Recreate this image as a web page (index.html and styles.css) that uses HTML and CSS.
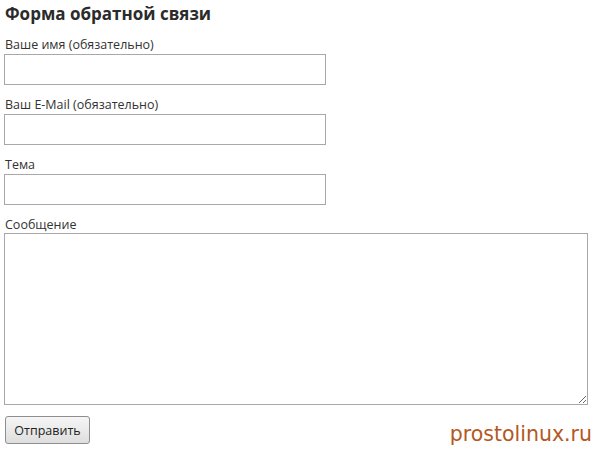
FILE: index.html
```html
<!DOCTYPE html>
<html lang="ru">
<head>
<meta charset="utf-8">
<title>Форма обратной связи</title>
<link rel="stylesheet" href="styles.css">
</head>
<body>
<form class="form">
  <h2 class="title">Форма обратной связи</h2>
  <div class="field">
    <label class="label">Ваше имя (обязательно)</label>
    <input class="input" type="text">
  </div>
  <div class="field">
    <label class="label">Ваш E-Mail (обязательно)</label>
    <input class="input" type="text">
  </div>
  <div class="field">
    <label class="label">Тема</label>
    <input class="input" type="text">
  </div>
  <div class="field field-last">
    <label class="label label-last">Сообщение</label>
    <textarea class="textarea"></textarea>
  </div>
  <div class="actions">
    <button class="button" type="button">Отправить</button>
  </div>
</form>
<div class="watermark">prostolinux.ru</div>
</body>
</html>
```
FILE: styles.css
```css
html, body {
  margin: 0;
  padding: 0;
  background: #ffffff;
}
body {
  width: 594px;
  height: 451px;
  position: relative;
  overflow: hidden;
  font-family: "Open Sans", "Noto Sans", sans-serif;
  color: #333333;
}
.form {
  display: flex;
  flex-direction: column;
  padding: 2px 0 0 4px;
}
.title {
  margin: 0 0 11px 1px;
  font-size: 17px;
  line-height: 24px;
  font-weight: 700;
  color: #2b2b2b;
}
.field {
  display: flex;
  flex-direction: column;
  align-items: flex-start;
  margin-bottom: 12px;
}
.label {
  font-size: 12.5px;
  line-height: 16px;
  margin: 0 0 1px 1px;
  color: #333333;
}
.label-last {
  margin-bottom: 0;
}
.input {
  box-sizing: border-box;
  width: 322px;
  height: 31px;
  margin: 0;
  border: 1px solid #a8a8a8;
  border-radius: 0;
  background: #ffffff;
  padding: 2px 4px;
}
.textarea {
  box-sizing: border-box;
  width: 584px;
  height: 172px;
  margin: 0;
  border: 1px solid #a8a8a8;
  border-radius: 0;
  background: #ffffff;
  padding: 2px 4px;
  display: block;
}
.field-last {
  margin-bottom: 11px;
}
.actions {
  display: flex;
  padding-left: 1px;
}
.button {
  box-sizing: border-box;
  width: 85px;
  height: 28px;
  margin: 0;
  border: 1px solid #8e8e8e;
  border-radius: 3px;
  background: linear-gradient(#f6f6f6, #dedede);
  font-family: "Open Sans", "Noto Sans", sans-serif;
  font-size: 12.5px;
  color: #222222;
  padding: 0;
}
.watermark {
  position: absolute;
  right: 2px;
  bottom: 5px;
  font-family: "DejaVu Sans", Verdana, sans-serif;
  font-size: 20.5px;
  line-height: 24px;
  color: #b3581f;
}
```
